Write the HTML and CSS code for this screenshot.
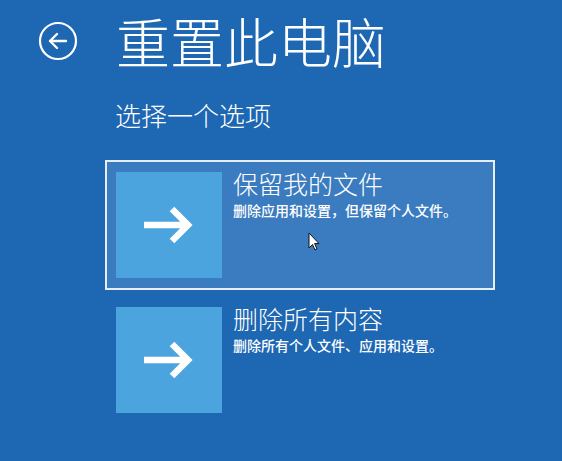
FILE: index.html
```html
<!DOCTYPE html>
<html lang="zh-CN">
<head>
<meta charset="utf-8">
<title>重置此电脑</title>
<link rel="stylesheet" href="styles.css">
</head>
<body>
<div class="screen">
  <header class="header">
    <button class="back" aria-label="返回">
      <svg viewBox="0 0 40 40" width="40" height="40">
        <circle cx="20" cy="20" r="18" fill="none" stroke="#fff" stroke-width="2.2"/>
        <path d="M12 20 H28 M19 13 L12 20 L19 27" fill="none" stroke="#fff" stroke-width="2.4" stroke-linecap="round" stroke-linejoin="round"/>
      </svg>
    </button>
    <h1 class="title">重置此电脑</h1>
  </header>
  <p class="subtitle">选择一个选项</p>
  <div class="options">
    <div class="option selected">
      <div class="tile">
        <svg viewBox="0 0 54 40" width="54" height="40">
          <path d="M2 20 H46 M30 4 L46 20 L30 36" fill="none" stroke="#fff" stroke-width="6.5" stroke-linejoin="miter"/>
        </svg>
      </div>
      <div class="text">
        <div class="opt-title">保留我的文件</div>
        <div class="opt-desc">删除应用和设置，但保留个人文件。</div>
      </div>
    </div>
    <div class="option">
      <div class="tile">
        <svg viewBox="0 0 54 40" width="54" height="40">
          <path d="M2 20 H46 M30 4 L46 20 L30 36" fill="none" stroke="#fff" stroke-width="6.5" stroke-linejoin="miter"/>
        </svg>
      </div>
      <div class="text">
        <div class="opt-title">删除所有内容</div>
        <div class="opt-desc">删除所有个人文件、应用和设置。</div>
      </div>
    </div>
  </div>
  <svg class="cursor" viewBox="0 0 12 19" width="12" height="19">
    <path d="M1 1 L1 16 L4.5 12.5 L7 18 L9 17 L6.6 11.6 L11 11.6 Z" fill="#fff" stroke="#111" stroke-width="1" stroke-linejoin="round"/>
  </svg>
</div>
</body>
</html>
```

FILE: styles.css
```css
html, body {
  margin: 0;
  padding: 0;
}

body {
  background: #1d67b3;
  font-family: "Noto Sans CJK SC", "Noto Sans", sans-serif;
  color: #fff;
}

.screen {
  position: relative;
  width: 562px;
  height: 461px;
  overflow: hidden;
}

.header {
  display: flex;
  align-items: center;
  padding: 13px 0 0 38px;
  height: 56px;
}

.back {
  width: 40px;
  height: 40px;
  padding: 0;
  border: 0;
  background: none;
  display: flex;
  margin-right: 38px;
}

.title {
  margin: 0;
  font-size: 54px;
  font-weight: 300;
  line-height: 56px;
  letter-spacing: 0;
}

.subtitle {
  margin: 31px 0 0 115px;
  font-size: 26px;
  font-weight: 300;
  line-height: 30px;
}

.options {
  display: flex;
  flex-direction: column;
  gap: 5px;
  margin: 30px 0 0 105px;
  width: 390px;
}

.option {
  display: flex;
  gap: 11px;
  padding: 10px 9px;
  border: 2px solid transparent;
}

.option.selected {
  background: #3b7bbf;
  border-color: #e6eef8;
}

.tile {
  width: 106px;
  height: 106px;
  flex: none;
  background: #4ca4de;
  display: flex;
  align-items: center;
  justify-content: center;
}

.text {
  display: flex;
  flex-direction: column;
}

.opt-title {
  font-size: 25px;
  font-weight: 300;
  line-height: 30px;
  margin-top: -4px;
}

.opt-desc {
  font-size: 14px;
  font-weight: 500;
  line-height: 18px;
  margin-top: 3px;
}

.cursor {
  position: absolute;
  left: 308px;
  top: 232px;
}
```
